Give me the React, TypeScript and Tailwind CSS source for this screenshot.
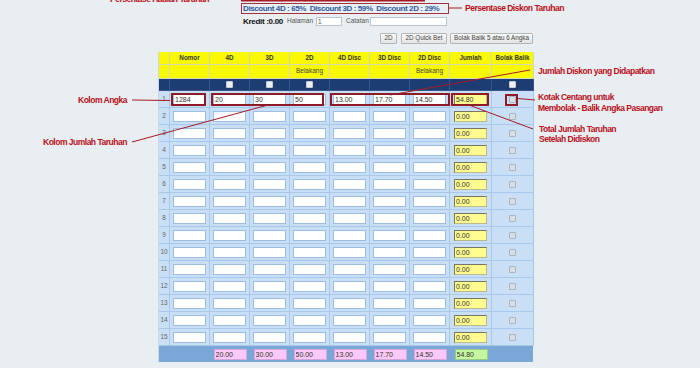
import React from "react";

const grid =
  "grid grid-cols-[11px_40px_40px_40px_40px_40px_40px_40px_42px_42px]";

const heads = ["", "Nomor", "4D", "3D", "2D", "4D Disc", "3D Disc", "2D Disc", "Jumlah", "Bolak Balik"];

const first = ["1284", "20", "30", "50", "13.00", "17.70", "14.50"];
const totals = ["20.00", "30.00", "50.00", "13.00", "17.70", "14.50"];

function Box({ value = "", tone = "white" }: { value?: string; tone?: "white" | "yellow" | "pink" | "green" }) {
  const tones = {
    white: "bg-white border-[#9cbde2]",
    yellow: "bg-[#fffb8f] border-[#b9b98f] border-t-[#77775f] border-l-[#77775f]",
    pink: "bg-[#fbc9f7] border-[#d6a6dc]",
    green: "bg-[#c6f7a0] border-[#9bc98a]",
  };
  return (
    <input
      readOnly
      value={value}
      className={`block w-[33px] h-[11px] px-[1px] border text-[7px] leading-none text-[#333] outline-none ${tones[tone]}`}
    />
  );
}

function Check({ dark = false }: { dark?: boolean }) {
  return (
    <span
      className={`block w-[7px] h-[7px] rounded-[1px] border ${
        dark ? "bg-[#eef1f4] border-[#c7ccd3]" : "bg-[#d9dee4] border-[#aab2bb]"
      }`}
    />
  );
}

export default function App() {
  return (
    <div className="relative w-[700px] h-[368px] overflow-hidden bg-[#e9eef3] font-['Liberation_Sans',Arial,sans-serif] leading-none">
      <div className="ml-[158px] w-[375px] pt-[3px]">
        {/* Discount + kredit */}
        <div className="ml-[83px]">
          <div className="flex items-center h-[11px] w-[208px] border border-[#a3323c] px-[1px] text-[8px] font-bold tracking-[-0.4px] text-[#2f5a9c] whitespace-pre">
            {"Discount 4D : 65%  Discount 3D : 59%  Discount 2D : 29%"}
          </div>
          <div className="flex items-center h-[11px] mt-[2px] ml-[2px] text-[6.5px] text-[#555]">
            <span className="text-[8px] font-bold tracking-[-0.3px] text-[#111] w-[44px]">Kredit :0.00</span>
            <span className="w-[29px]">Halaman</span>
            <input readOnly value="1" className="block w-[26px] h-[9px] px-[1px] border border-[#b8c4d0] bg-white text-[6.5px] leading-none" />
            <span className="ml-[4px] w-[24px]">Catatan</span>
            <input readOnly value="" className="block w-[77px] h-[9px] border border-[#b8c4d0] bg-white" />
          </div>
        </div>

        {/* Buttons */}
        <div className="flex justify-end items-center mt-[6px] h-[11px] text-[6.3px] text-[#444]">
          <button className="w-[17px] h-[11px] border border-[#b5b5b5] rounded-[1px] bg-gradient-to-b from-[#fbfbfb] to-[#e3e3e3] leading-none">2D</button>
          <button className="ml-[4px] w-[46px] h-[11px] border border-[#b5b5b5] rounded-[1px] bg-gradient-to-b from-[#fbfbfb] to-[#e3e3e3] leading-none">2D Quick Bet</button>
          <button className="ml-[3px] w-[83px] h-[11px] border border-[#b5b5b5] rounded-[1px] bg-gradient-to-b from-[#fbfbfb] to-[#e3e3e3] leading-none whitespace-nowrap">Bolak Balik 5 atau 6 Angka</button>
        </div>

        {/* Table */}
        <div className="mt-[8px] border-l border-[#c9d9ea]">
          <div className={`${grid} h-[13px] bg-[#f9f904]`}>
            {heads.map((h, i) => (
              <div key={i} className="flex items-center justify-center border-r border-b border-[#d5d8b4] text-[6.3px] font-bold text-[#333] whitespace-nowrap">
                {h}
              </div>
            ))}
          </div>
          <div className={`${grid} h-[14px] bg-[#f9f904]`}>
            {heads.map((h, i) => (
              <div key={i} className="flex items-center justify-center border-r border-b border-[#d5d8b4] text-[6.5px] text-[#444]">
                {i === 4 || i === 7 ? "Belakang" : ""}
              </div>
            ))}
          </div>
          <div className={`${grid} h-[12px] bg-[#1d3d72]`}>
            {heads.map((h, i) => (
              <div key={i} className="flex items-center justify-center border-r border-b border-[#36558a]">
                {(i === 2 || i === 3 || i === 4 || i === 9) && <Check dark />}
              </div>
            ))}
          </div>
          {Array.from({ length: 15 }, (_, r) => (
            <div key={r} className={`${grid} h-[17px] bg-[#c9dff5]`}>
              <div className="flex items-center justify-center border-r border-b border-[#a7c8ea] text-[6.5px] text-[#666]">
                {r + 1}
              </div>
              {Array.from({ length: 7 }, (_, c) => (
                <div key={c} className="flex items-center justify-center border-r border-b border-[#a7c8ea]">
                  <Box value={r === 0 ? first[c] : ""} />
                </div>
              ))}
              <div className="flex items-center justify-center border-r border-b border-[#a7c8ea]">
                <Box tone="yellow" value={r === 0 ? "54.80" : "0.00"} />
              </div>
              <div className="flex items-center justify-center border-r border-b border-[#a7c8ea]">
                <Check />
              </div>
            </div>
          ))}
          <div className={`${grid} h-[16px] bg-[#7aa7d6]`}>
            <div />
            <div />
            {totals.map((t, i) => (
              <div key={i} className="flex items-center justify-center">
                <Box tone="pink" value={t} />
              </div>
            ))}
            <div className="flex items-center justify-center">
              <Box tone="green" value="54.80" />
            </div>
            <div />
          </div>
        </div>
      </div>

      {/* Annotations */}
      <div className="absolute inset-0 pointer-events-none text-[8.5px] font-bold tracking-[-0.5px] text-[#b80f19] leading-[10px] whitespace-nowrap">
        <div className="absolute left-[110px] top-[-6px]">Persentase Hadiah Taruhan</div>
        <div className="absolute left-[465px] top-[3px]">Persentase Diskon Taruhan</div>
        <div className="absolute left-[538px] top-[66px]">Jumlah Diskon yang Didapatkan</div>
        <div className="absolute left-[538px] top-[92px]">Kotak Centang untuk</div>
        <div className="absolute left-[538px] top-[103px]">Membolak - Balik Angka Pasangan</div>
        <div className="absolute left-[539px] top-[124px]">Total Jumlah Taruhan</div>
        <div className="absolute left-[539px] top-[134px]">Setelah Didiskon</div>
        <div className="absolute left-[78px] top-[95px]">Kolom Angka</div>
        <div className="absolute left-[43px] top-[137px]">Kolom Jumlah Taruhan</div>
        <svg className="absolute inset-0" width="700" height="368" viewBox="0 0 700 368">
          <g stroke="#a81a24" fill="none">
            <line x1="241" y1="0.5" x2="425" y2="0.5" strokeWidth="2" />
            <line x1="282" y1="0" x2="282" y2="1.5" strokeWidth="1" />
            <line x1="305" y1="0" x2="305" y2="1.5" strokeWidth="1" />
            <line x1="312" y1="0" x2="312" y2="1.5" strokeWidth="1" />
            <line x1="449" y1="8" x2="462" y2="8" strokeWidth="1" />
            <line x1="530" y1="70" x2="390" y2="95" strokeWidth="1" />
            <line x1="518" y1="98.5" x2="535" y2="100" strokeWidth="1" />
            <line x1="469" y1="105" x2="533" y2="129" strokeWidth="1" />
            <line x1="132" y1="100" x2="170" y2="100.5" strokeWidth="1" />
            <line x1="132" y1="142" x2="268" y2="105" strokeWidth="1" />
          </g>
          <g stroke="#8e1b25" strokeWidth="2" fill="none">
            <rect x="172" y="94" width="33" height="11" />
            <rect x="212" y="94" width="111" height="11" />
            <rect x="331" y="94" width="118" height="11" />
            <rect x="452" y="94" width="36" height="11" />
            <rect x="506" y="95" width="11" height="10" />
          </g>
        </svg>
      </div>
    </div>
  );
}
